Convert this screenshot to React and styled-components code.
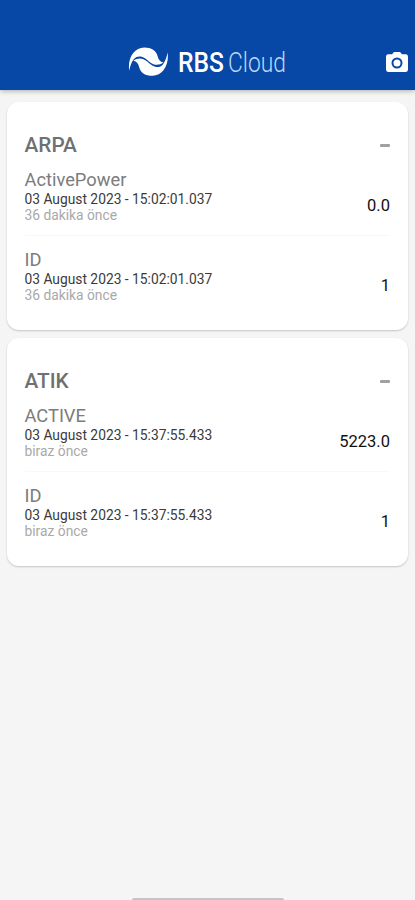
import React from "react";
import styled, { createGlobalStyle } from "styled-components";

const GlobalStyle = createGlobalStyle`
  * { box-sizing: border-box; }
  body { margin: 0; background: #f5f5f5; font-family: Roboto, sans-serif; }
`;

const Screen = styled.div`
  height: 900px;
  display: flex;
  flex-direction: column;
  background: #f5f5f5;
  overflow: hidden;
`;

const Header = styled.header`
  height: 90px;
  flex: none;
  display: grid;
  grid-template-columns: 1fr auto 1fr;
  align-items: end;
  padding-bottom: 10px;
  background: #0747a6;
  box-shadow: 0 1px 5px rgba(0, 0, 0, 0.3);
`;

const Brand = styled.div`
  grid-column: 2;
  display: flex;
  align-items: center;
  height: 36px;
  color: #fff;
`;

const CameraButton = styled.button`
  justify-self: end;
  display: flex;
  padding: 0;
  margin: 0 7px 8px 0;
  border: 0;
  background: none;
`;

const Content = styled.main`
  flex: 1;
  display: flex;
  flex-direction: column;
  gap: 8px;
  padding: 12px 7px 0;
`;

const Card = styled.section`
  height: 228px;
  padding: 29px 18px 0 17.5px;
  border-radius: 12px;
  background: #fff;
  box-shadow: 0 1px 2px rgba(0, 0, 0, 0.2);
`;

const CardHeader = styled.div`
  display: flex;
  justify-content: space-between;
  align-items: center;
  height: 28px;
`;

const CardTitle = styled.h2`
  margin: 0;
  font-size: 20.8px;
  line-height: 28px;
  font-weight: 500;
  color: #707070;
`;

const Collapse = styled.span`
  width: 10px;
  height: 3px;
  border-radius: 1px;
  background: #a0a0a0;
`;

const Reading = styled.div`
  display: flex;
  justify-content: space-between;
  height: 80px;
  padding-top: 9px;
`;

const Divider = styled.hr`
  height: 1px;
  margin: -4px 0 3px;
  border: 0;
  background: #f8f8f8;
`;

const Name = styled.div`
  font-size: 18.3px;
  line-height: 23px;
  color: #7c7c7c;
`;

const Stamp = styled.div`
  font-size: 13.8px;
  line-height: 16px;
  color: #3a3a3a;
`;

const Ago = styled.div`
  font-size: 13.8px;
  line-height: 16px;
  color: #a9a9a9;
`;

const Value = styled.div`
  padding-top: 28px;
  font-size: 16.5px;
  line-height: 20px;
  color: #111;
`;

const HomeBar = styled.div`
  width: 152px;
  height: 2px;
  align-self: center;
  border-radius: 2px 2px 0 0;
  background: #c4c4c4;
`;

const WAVE =
  "M.8 23.8C-1 11 6 .6 15.8 .6 23 .6 27.8 3.5 29.3 9.5 30 12.5 31.5 14.8 35 15.6 32 18 28 18.3 25 17.2 21.5 15.8 19.5 13.2 16.5 11.2 13 8.9 8.5 8.5 5.5 12 3 15 1.8 19 .8 23.8Z";

const Swirl = () => (
  <svg width="40" height="30" viewBox="-0.4 0 40 30" fill="#fff">
    <path d={WAVE} />
    <path d={WAVE} transform="rotate(180 20 14.7)" />
  </svg>
);

const Wordmark = styled.svg`
  margin-left: 10px;
  overflow: visible;
  font-family: Roboto, sans-serif;
`;

const groups = [
  {
    title: "ARPA",
    rows: [
      { name: "ActivePower", stamp: "03 August 2023 - 15:02:01.037", ago: "36 dakika önce", value: "0.0" },
      { name: "ID", stamp: "03 August 2023 - 15:02:01.037", ago: "36 dakika önce", value: "1" },
    ],
  },
  {
    title: "ATIK",
    rows: [
      { name: "ACTIVE", stamp: "03 August 2023 - 15:37:55.433", ago: "biraz önce", value: "5223.0" },
      { name: "ID", stamp: "03 August 2023 - 15:37:55.433", ago: "biraz önce", value: "1" },
    ],
  },
];

export default function App() {
  return (
    <Screen>
      <GlobalStyle />
      <Header>
        <Brand>
          <Swirl />
          <Wordmark width="109" height="34" fill="#fff">
            <text x="0" y="27" fontSize="28" fontWeight="500" textLength="46" lengthAdjust="spacingAndGlyphs">RBS</text>
            <text x="50" y="27" fontSize="28" fontWeight="300" fill="#bcd8f4" textLength="58" lengthAdjust="spacingAndGlyphs">Cloud</text>
          </Wordmark>
        </Brand>
        <CameraButton aria-label="camera">
          <svg width="22" height="20" viewBox="0 0 22 20" fill="#fff">
            <path fillRule="evenodd" d="M8 0h6l2 2.3h3.5A2.4 2.4 0 0 1 22 4.7v12.9a2.4 2.4 0 0 1-2.5 2.4h-17A2.4 2.4 0 0 1 0 17.6V4.7a2.4 2.4 0 0 1 2.5-2.4H6ZM11 5.5a5.5 5.5 0 1 0 0 11 5.5 5.5 0 0 0 0-11Z" />
            <circle cx="11" cy="11" r="3.5" />
          </svg>
        </CameraButton>
      </Header>
      <Content>
        {groups.map((g) => (
          <Card key={g.title}>
            <CardHeader>
              <CardTitle>{g.title}</CardTitle>
              <Collapse />
            </CardHeader>
            {g.rows.map((r, i) => (
              <React.Fragment key={r.name}>
                {i > 0 && <Divider />}
                <Reading>
                  <div>
                    <Name>{r.name}</Name>
                    <Stamp>{r.stamp}</Stamp>
                    <Ago>{r.ago}</Ago>
                  </div>
                  <Value>{r.value}</Value>
                </Reading>
              </React.Fragment>
            ))}
          </Card>
        ))}
      </Content>
      <HomeBar />
    </Screen>
  );
}
